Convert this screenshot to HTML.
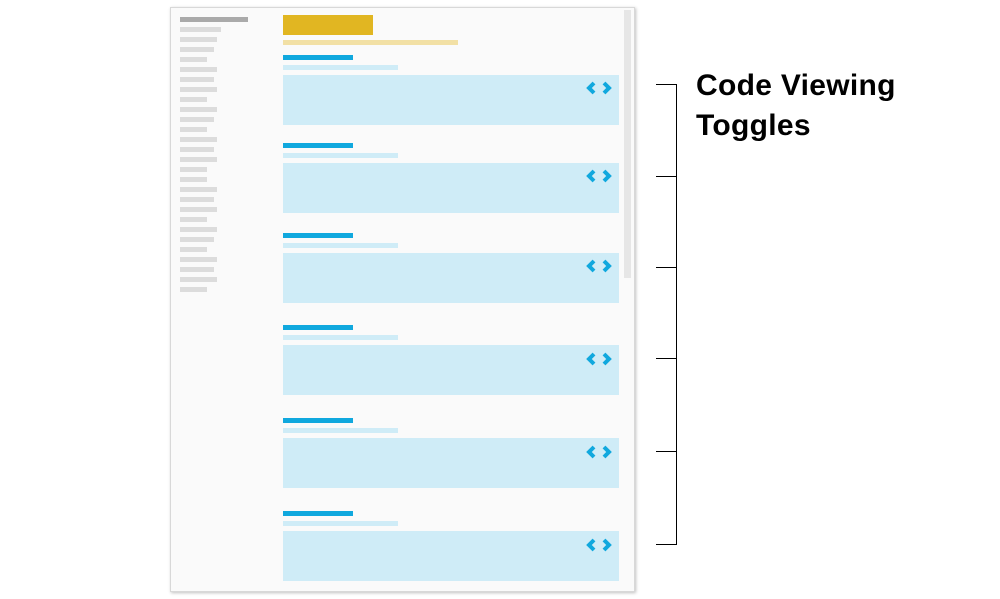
<!DOCTYPE html>
<html><head><style>
body{margin:0;width:1000px;height:599px;background:#fff;position:relative;overflow:hidden;font-family:"Liberation Sans",sans-serif}
div{position:absolute}
.f{left:170px;top:7px;width:463px;height:583px;background:#fafafa;border:1px solid #d8d8d8;box-shadow:1px 1px 3px rgba(0,0,0,.25)}
.s{left:180px;height:5px;background:#dcdcdc}
.h{left:283px;width:70px;height:5px;background:#10a8de}
.t{left:283px;width:115px;height:5px;background:#cfecf7}
.b{left:283px;width:336px;height:50px;background:#cfecf7}
.k{left:656px;width:20px;height:1px;background:#000}
</style></head><body>
<div class="f"></div>
<div style="left:624px;top:10px;width:7px;height:268px;background:#e6e6e6"></div>
<div style="left:180px;top:17px;width:68px;height:5px;background:#aaa"></div>
<div class="s" style="top:27px;width:41px"></div><div class="s" style="top:37px;width:37px"></div>
<div class="s" style="top:47px;width:34px"></div><div class="s" style="top:57px;width:27px"></div>
<div class="s" style="top:67px;width:37px"></div><div class="s" style="top:77px;width:34px"></div>
<div class="s" style="top:87px;width:37px"></div><div class="s" style="top:97px;width:27px"></div>
<div class="s" style="top:107px;width:37px"></div><div class="s" style="top:117px;width:34px"></div>
<div class="s" style="top:127px;width:27px"></div><div class="s" style="top:137px;width:37px"></div>
<div class="s" style="top:147px;width:34px"></div><div class="s" style="top:157px;width:37px"></div>
<div class="s" style="top:167px;width:27px"></div><div class="s" style="top:177px;width:27px"></div>
<div class="s" style="top:187px;width:37px"></div><div class="s" style="top:197px;width:34px"></div>
<div class="s" style="top:207px;width:37px"></div><div class="s" style="top:217px;width:27px"></div>
<div class="s" style="top:227px;width:37px"></div><div class="s" style="top:237px;width:34px"></div>
<div class="s" style="top:247px;width:27px"></div><div class="s" style="top:257px;width:37px"></div>
<div class="s" style="top:267px;width:34px"></div><div class="s" style="top:277px;width:37px"></div>
<div class="s" style="top:287px;width:27px"></div>
<div style="left:283px;top:15px;width:90px;height:20px;background:#e1b622"></div>
<div style="left:283px;top:40px;width:175px;height:5px;background:#f2e0a5"></div>

<div class="h" style="top:55px"></div><div class="t" style="top:65px"></div><div class="b" style="top:75px"></div>
<div class="h" style="top:143px"></div><div class="t" style="top:153px"></div><div class="b" style="top:163px"></div>
<div class="h" style="top:233px"></div><div class="t" style="top:243px"></div><div class="b" style="top:253px"></div>
<div class="h" style="top:325px"></div><div class="t" style="top:335px"></div><div class="b" style="top:345px"></div>
<div class="h" style="top:418px"></div><div class="t" style="top:428px"></div><div class="b" style="top:438px"></div>
<div class="h" style="top:511px"></div><div class="t" style="top:521px"></div><div class="b" style="top:531px"></div>

<svg style="position:absolute;left:0;top:0" width="1000" height="599">
<defs><g id="i" fill="none" stroke="#10a8de" stroke-width="4"><path d="M594 3 L589 8 L594 13"/><path d="M604 3 L609 8 L604 13"/></g></defs>
<use href="#i" y="80"/><use href="#i" y="168"/><use href="#i" y="258"/><use href="#i" y="351"/><use href="#i" y="444"/><use href="#i" y="537"/>
</svg>

<div style="left:676px;top:84px;width:1px;height:461px;background:#000"></div>
<div class="k" style="top:84px"></div><div class="k" style="top:176px"></div><div class="k" style="top:267px"></div>
<div class="k" style="top:358px"></div><div class="k" style="top:451px"></div><div class="k" style="top:544px"></div>
<div style="left:696px;top:66px;font-size:30px;font-weight:bold;line-height:40px;color:#000;letter-spacing:0.3px">Code Viewing<br>Toggles</div>
</body></html>
